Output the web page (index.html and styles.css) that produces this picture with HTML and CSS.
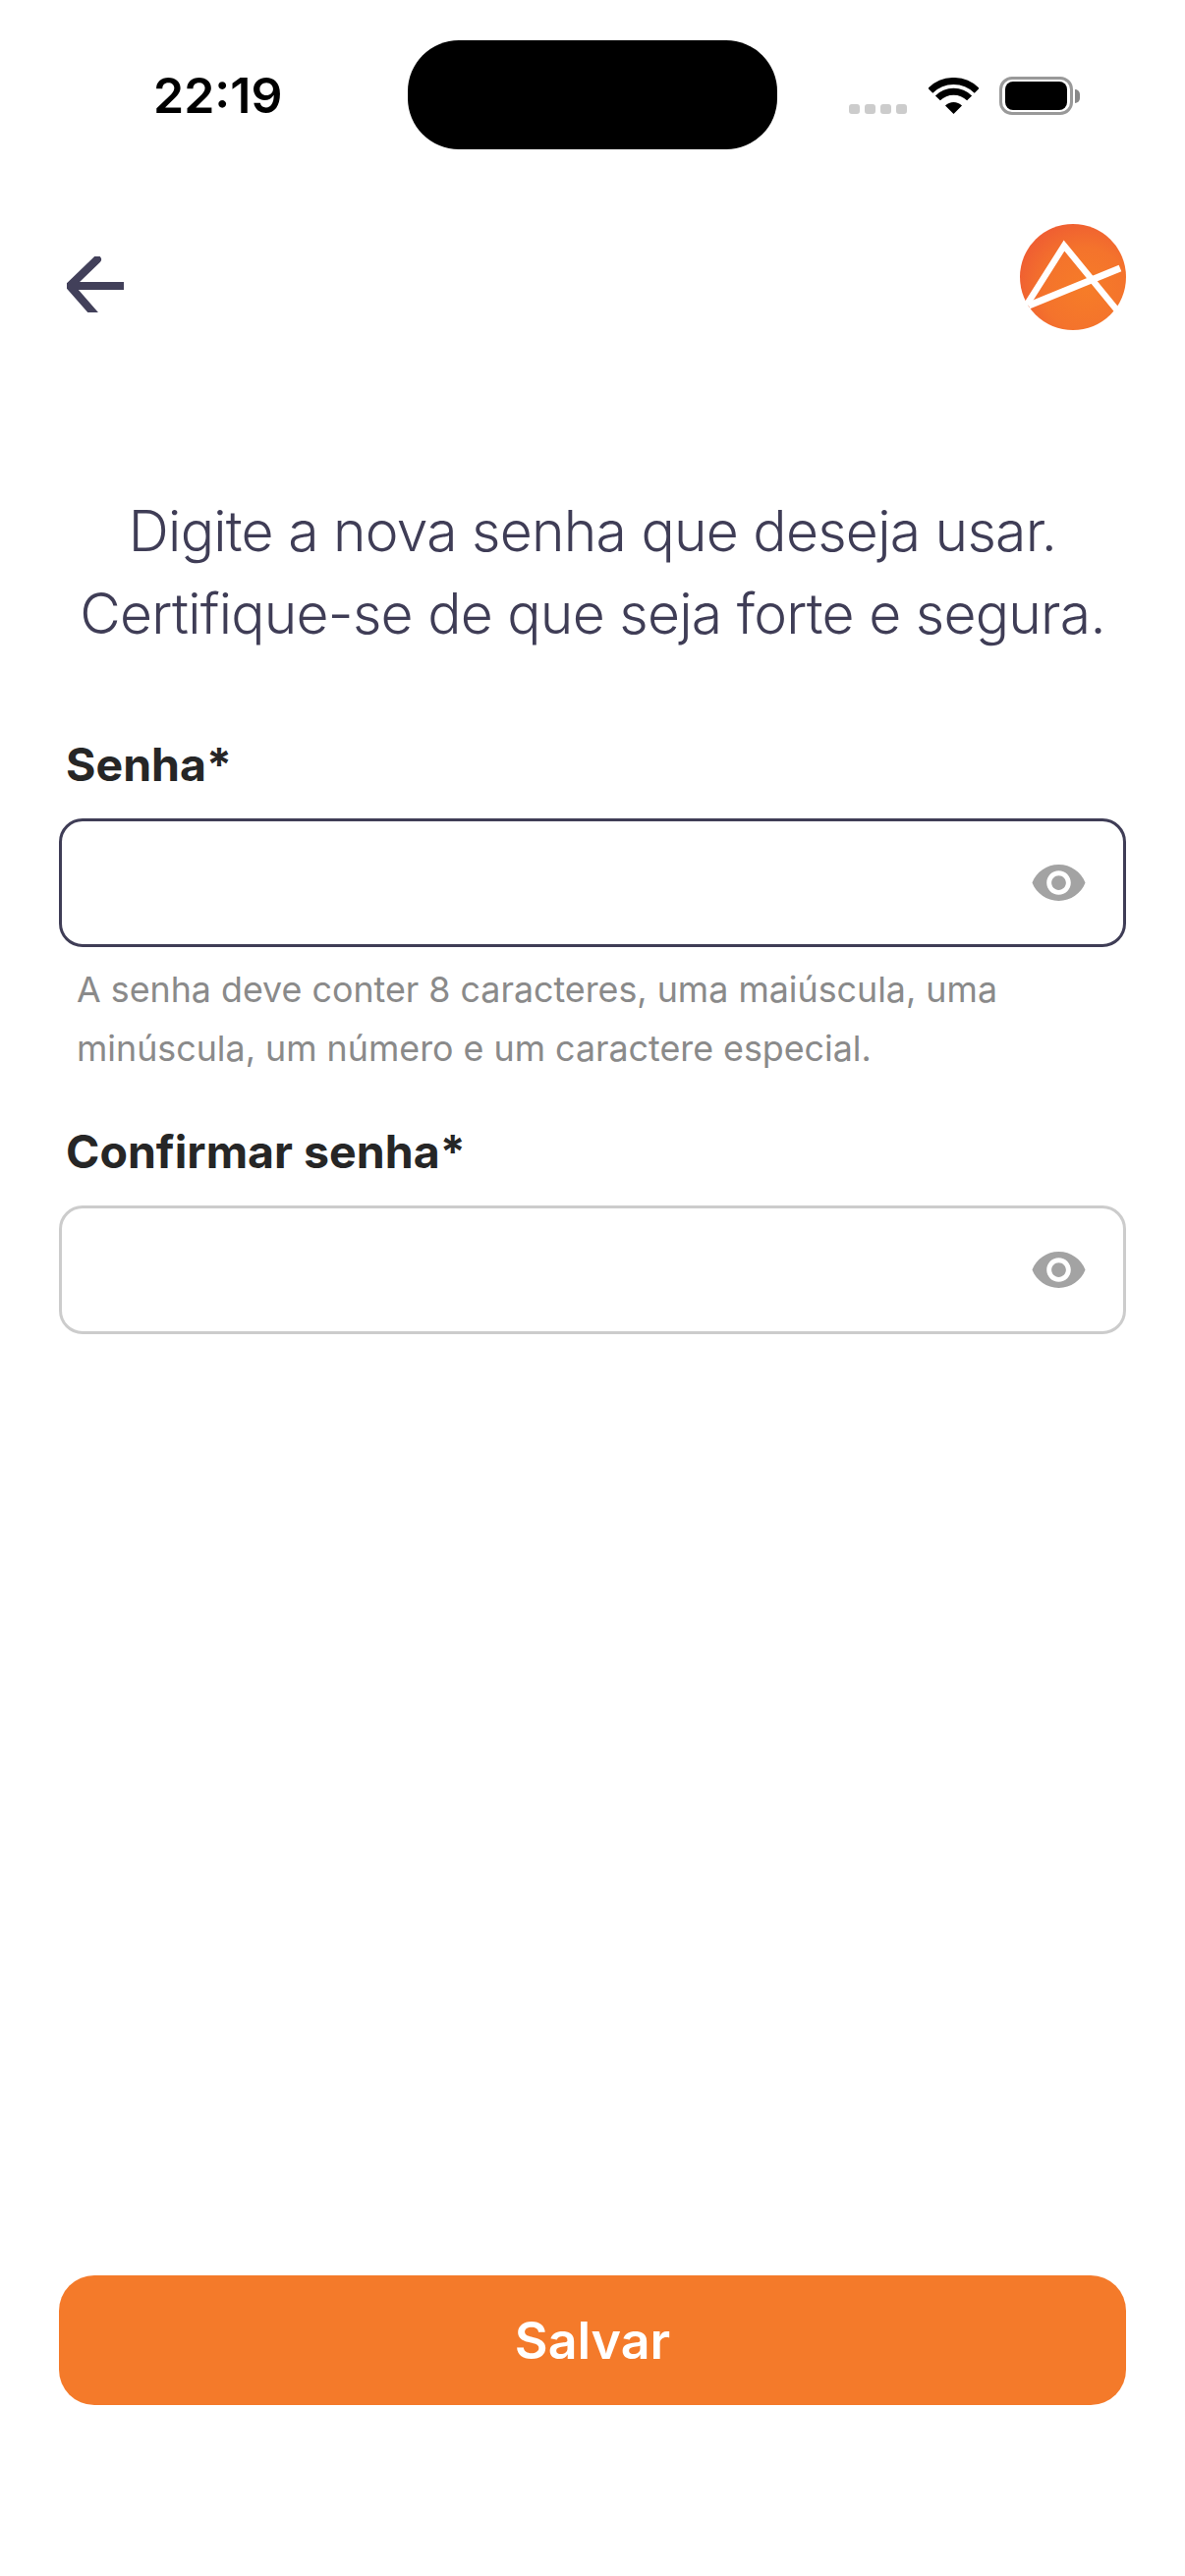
FILE: index.html
```html
<!DOCTYPE html>
<html lang="pt-BR">
<head>
    <meta charset="utf-8">
    <title>Nova senha</title>
    <link rel="stylesheet" href="styles.css">
</head>

<body>

    <div class="screen">
        <div class="status-bar">
            <span class="time">22:19</span>
            <div class="island"></div>
            <div class="status-icons">
                <div class="signal">
                    <span class="dot"></span>
                    <span class="dot"></span>
                    <span class="dot"></span>
                    <span class="dot"></span>
                </div>
                <svg class="wifi" width="51" height="37" viewBox="0 0 51 37">
                    <path d="M1.8 13.3A33.5 33.5 0 0 1 49.2 13.3" fill="none" stroke="#000" stroke-width="7"/>
                    <path d="M9.4 20.9A22.75 22.75 0 0 1 41.6 20.9" fill="none" stroke="#000" stroke-width="7"/>
                    <path d="M25.5 37L17 28.5A12 12 0 0 1 34 28.5Z" fill="#000"/>
                </svg>
                <div class="battery">
                    <div class="battery-fill"></div>
                </div>
                <div class="battery-cap"></div>
            </div>
        </div>

        <div class="top-bar">
            <svg class="back" width="58" height="57" viewBox="0 0 58 57">
                <path d="M57.5 30H4M31 3L3 30L31 62" fill="none" stroke="#42405a" stroke-width="8" stroke-linecap="round" stroke-linejoin="round"/>
            </svg>
            <svg class="logo" width="108" height="108" viewBox="0 0 108 108">
                <defs>
                    <radialGradient id="logoFill" cx="0.62" cy="0.62" r="0.72">
                        <stop offset="0" stop-color="#f67c28"/>
                        <stop offset="0.55" stop-color="#f4732c"/>
                        <stop offset="1" stop-color="#ee5a33"/>
                    </radialGradient>
                </defs>
                <circle cx="54" cy="54" r="54" fill="url(#logoFill)"/>
                <path d="M7 82L45 22L99 88" fill="none" stroke="#fff" stroke-width="6.5"/>
                <path d="M9 83L102 45" fill="none" stroke="#fff" stroke-width="7"/>
            </svg>
        </div>

        <p class="intro">Digite a nova senha que deseja usar.<br>Certifique-se de que seja forte e segura.</p>

        <div class="form">
            <label class="field-label">Senha*</label>
            <div class="input-box input-box-active">
                <svg class="eye" width="59" height="59" viewBox="0 0 24 24">
                    <path d="M12 4.5C7 4.5 2.73 7.61 1 12c1.73 4.39 6 7.5 11 7.5s9.27-3.11 11-7.5c-1.73-4.39-6-7.5-11-7.5zM12 17c-2.76 0-5-2.24-5-5s2.24-5 5-5 5 2.24 5 5-2.24 5-5 5zm0-8c-1.66 0-3 1.34-3 3s1.34 3 3 3 3-1.34 3-3-1.34-3-3-3z" fill="#a3a3a3"/>
                </svg>
            </div>
            <p class="hint">A senha deve conter 8 caracteres, uma maiúscula, uma<br>minúscula, um número e um caractere especial.</p>

            <label class="field-label field-label-second">Confirmar senha*</label>
            <div class="input-box">
                <svg class="eye" width="59" height="59" viewBox="0 0 24 24">
                    <path d="M12 4.5C7 4.5 2.73 7.61 1 12c1.73 4.39 6 7.5 11 7.5s9.27-3.11 11-7.5c-1.73-4.39-6-7.5-11-7.5zM12 17c-2.76 0-5-2.24-5-5s2.24-5 5-5 5 2.24 5 5-2.24 5-5 5zm0-8c-1.66 0-3 1.34-3 3s1.34 3 3 3 3-1.34 3-3-1.34-3-3-3z" fill="#a3a3a3"/>
                </svg>
            </div>
        </div>

        <button class="button">Salvar</button>
    </div>

</body>
</html>
```

FILE: styles.css
```css
body {
    font-family: 'Inter', 'Liberation Sans', sans-serif;
    background-color: #fff;
    margin: 0;
}

.screen {
    width: 1206px;
    height: 2622px;
    display: flex;
    flex-direction: column;
    box-sizing: border-box;
    padding-bottom: 174px;
    overflow: hidden;
}

.status-bar {
    display: flex;
    align-items: center;
    height: 111px;
    margin-top: 41px;
    padding-left: 156px;
}

.time {
    width: 259px;
    font-size: 50px;
    font-weight: 600;
    line-height: 52px;
    color: #000;
    margin-top: 1px;
}

.island {
    width: 376px;
    height: 111px;
    background-color: #000;
    border-radius: 52px;
}

.status-icons {
    display: flex;
    align-items: flex-start;
    margin-left: 73px;
    height: 39px;
    margin-top: 1px;
}

.signal {
    display: flex;
    gap: 5.5px;
    margin-top: 28px;
    margin-right: 22px;
}

.dot {
    width: 10.5px;
    height: 10px;
    border-radius: 3px;
    background-color: #ccc;
}

.wifi {
    margin-top: 1px;
    margin-right: 21px;
}

.battery {
    width: 75px;
    height: 39px;
    box-sizing: border-box;
    border: 3px solid #999;
    border-radius: 13px;
    padding: 2px 3px;
}

.battery-fill {
    height: 100%;
    background-color: #000;
    border-radius: 8px;
}

.battery-cap {
    width: 5px;
    height: 14px;
    margin-top: 13px;
    margin-left: 2px;
    background-color: #888;
    border-radius: 0 6px 6px 0;
}

.top-bar {
    display: flex;
    justify-content: space-between;
    align-items: flex-start;
    margin-top: 76px;
    padding: 0 60px 0 68px;
}

.back {
    margin-top: 33px;
}

.intro {
    margin: 0;
    margin-top: 163px;
    text-align: center;
    font-size: 57px;
    font-weight: 300;
    letter-spacing: -0.75px;
    line-height: 84px;
    color: #3f3d56;
}

.form {
    display: flex;
    flex-direction: column;
    padding: 0 60px;
    margin-top: 83px;
}

.field-label {
    font-size: 46.5px;
    font-weight: 700;
    line-height: 56px;
    color: #262626;
    margin-left: 7px;
    margin-bottom: 27px;
}

.field-label-second {
    margin-top: 47px;
}

.input-box {
    height: 131px;
    box-sizing: border-box;
    border: 3px solid #ccc;
    border-radius: 24px;
    display: flex;
    align-items: center;
    justify-content: flex-end;
    padding-right: 36px;
    background-color: #fff;
}

.input-box-active {
    border-color: #3f3d56;
}

.hint {
    margin: 0;
    margin-top: 13px;
    margin-left: 18px;
    font-size: 35.8px;
    line-height: 60px;
    color: #8a8a8a;
}

.button {
    display: block;
    margin: auto 60px 0;
    height: 132px;
    border: none;
    border-radius: 36px;
    background-color: #f47a2a;
    color: #fff;
    font-family: inherit;
    font-size: 52px;
    font-weight: 600;
}
```
